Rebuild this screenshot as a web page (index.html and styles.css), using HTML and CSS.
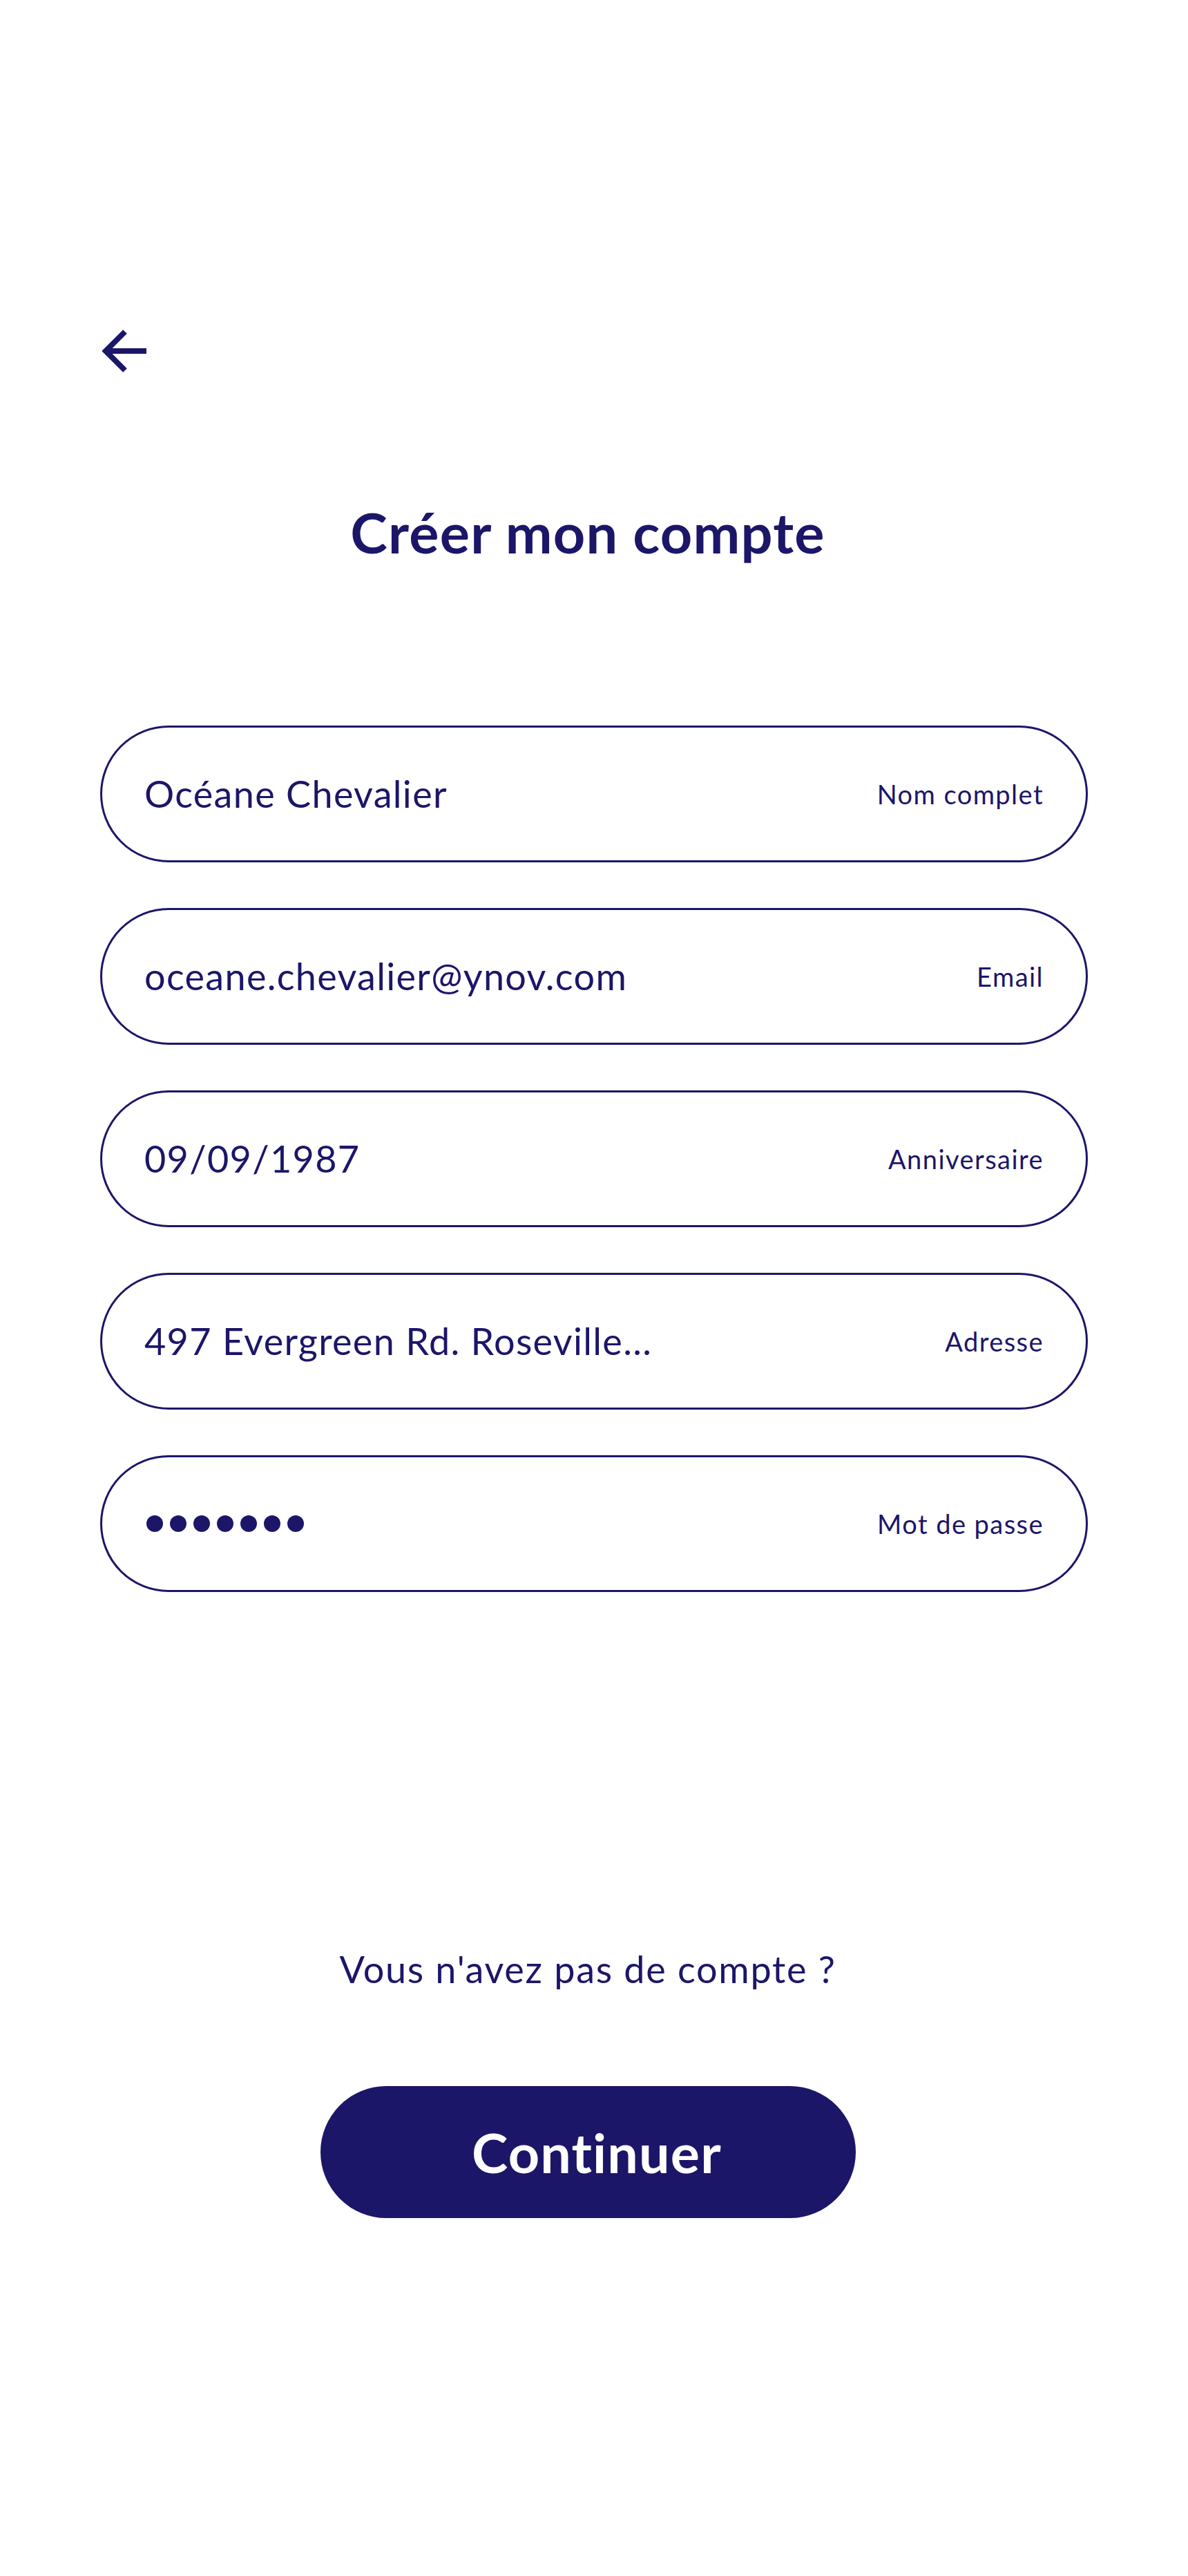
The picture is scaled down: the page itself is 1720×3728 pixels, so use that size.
FILE: index.html
```html
<!DOCTYPE html>
<html lang="fr">
<head>
<meta charset="utf-8">
<title>Créer mon compte</title>
<link rel="stylesheet" href="styles.css">
</head>
<body>
<main class="screen">
  <a class="back" href="#" aria-label="Retour">
    <svg width="64" height="64" viewBox="0 0 64 64" fill="none">
      <path d="M33 4 L5 32 L33 60" stroke="#1c1669" stroke-width="8" stroke-linejoin="miter"/>
      <path d="M6 32 H64" stroke="#1c1669" stroke-width="8"/>
    </svg>
  </a>

  <h1 class="title">Créer mon compte</h1>

  <form class="form">
    <div class="field"><span class="value">Océane Chevalier</span><span class="label">Nom complet</span></div>
    <div class="field"><span class="value">oceane.chevalier@ynov.com</span><span class="label">Email</span></div>
    <div class="field"><span class="value">09/09/1987</span><span class="label">Anniversaire</span></div>
    <div class="field"><span class="value">497 Evergreen Rd. Roseville...</span><span class="label">Adresse</span></div>
    <div class="field">
      <span class="dots"><i></i><i></i><i></i><i></i><i></i><i></i><i></i></span>
      <span class="label">Mot de passe</span>
    </div>
  </form>

  <div class="footer">
    <p class="signup">Vous n'avez pas de compte ?</p>
    <button class="btn" type="button">Continuer</button>
  </div>
</main>
</body>
</html>
```

FILE: styles.css
```css
* { box-sizing: border-box; }
html, body { margin: 0; padding: 0; background: #ffffff; }
body {
  font-family: Lato, "Noto Sans", "DejaVu Sans", sans-serif;
  color: #1c1669;
}
.screen {
  width: 1720px;
  padding: 476px 145px 0;
}
.back {
  display: block;
  width: 64px;
  height: 64px;
  margin-left: 3px;
}
.back svg { display: block; }
.title {
  margin: 189px 18px 0 0;
  font-size: 81px;
  letter-spacing: 1.2px;
  line-height: 1;
  font-weight: 700;
  text-align: center;
}
.form {
  margin-top: 240px;
  display: flex;
  flex-direction: column;
  gap: 66px;
}
.field {
  height: 198px;
  border: 3px solid #1c1669;
  border-radius: 99px;
  display: flex;
  align-items: center;
  justify-content: space-between;
  padding: 0 61px;
}
.value {
  font-size: 54px;
  letter-spacing: 1.3px;
  line-height: 1;
  white-space: nowrap;
}
.label {
  font-size: 38px;
  letter-spacing: 1.45px;
  line-height: 1;
}
.dots {
  display: flex;
  gap: 10px;
  margin-left: 3px;
}
.dots i {
  display: block;
  width: 24px;
  height: 24px;
  border-radius: 50%;
  background: #1c1669;
}
.footer {
  display: flex;
  flex-direction: column;
  align-items: center;
  margin-right: 18px;
}
.signup {
  margin: 519px 0 0;
  font-size: 54px;
  letter-spacing: 1.7px;
  line-height: 1;
}
.btn {
  margin: 142px 0 0;
  width: 775px;
  height: 191px;
  padding: 0 0 0 26px;
  border: none;
  border-radius: 96px;
  background: #1c1669;
  color: #ffffff;
  font-family: Lato, "Noto Sans", "DejaVu Sans", sans-serif;
  font-size: 79px;
  letter-spacing: 1.2px;
  font-weight: 700;
  line-height: 1;
  cursor: pointer;
}
```
